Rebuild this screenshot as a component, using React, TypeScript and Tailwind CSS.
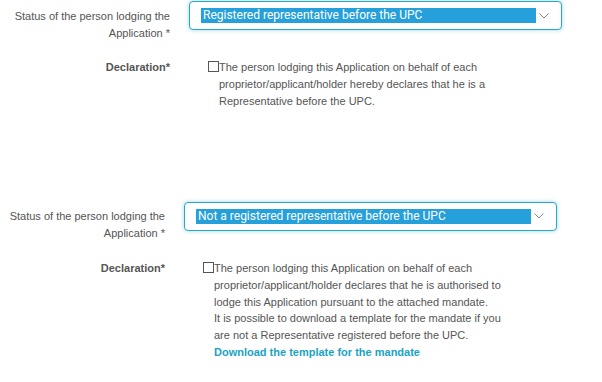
import React from "react";

const arial = { fontFamily: '"Liberation Sans", Arial, sans-serif' };

function Chevron() {
  return (
    <svg width="10" height="6" viewBox="0 0 10 6" className="shrink-0">
      <polyline points="0.5,0.5 5,5 9.5,0.5" fill="none" stroke="#8a8a8a" strokeWidth="1" />
    </svg>
  );
}

function Select({ text }: { text: string }) {
  return (
    <div className="ml-[19px] flex h-[29px] w-[373px] items-center rounded-[4px] border border-[#2aa7c5] bg-white pl-[11px] pr-[12px] shadow-[0_0_4px_rgba(42,167,197,0.45)]">
      <div
        className="h-[15px] w-[335px] bg-[#26a0da] pl-[2px] text-[12px] leading-[15px] text-white whitespace-nowrap"
        style={{ fontFamily: "Roboto, sans-serif" }}
      >
        {text}
      </div>
      <div className="ml-[3px]">
        <Chevron />
      </div>
    </div>
  );
}

function Checkbox() {
  return <span className="mt-[2px] inline-block h-[11px] w-[11px] shrink-0 border border-[#555] bg-white" />;
}

export default function App() {
  return (
    <div className="min-h-[382px] w-[602px] bg-white text-[11px] text-[#555]" style={arial}>
      {/* Block 1 */}
      <div className="pt-[1px]">
        <div className="flex">
          <div className="w-[170px] shrink-0 pt-[6.5px] text-right leading-[17px]">
            Status of the person lodging the
            <br />
            Application *
          </div>
          <Select text="Registered representative before the UPC" />
        </div>
        <div className="mt-[17px] flex">
          <div className="w-[170px] shrink-0 text-right font-bold leading-[17px]">Declaration*</div>
          <div className="ml-[38px] flex">
            <Checkbox />
            <div className="leading-[17px] whitespace-nowrap">
              The person lodging this Application on behalf of each
              <br />
              proprietor/applicant/holder hereby declares that he is a
              <br />
              Representative before the UPC.
            </div>
          </div>
        </div>
      </div>

      {/* Block 2 */}
      <div className="mt-[92px]">
        <div className="flex">
          <div className="w-[165px] shrink-0 pt-[6.5px] text-right leading-[17px]">
            Status of the person lodging the
            <br />
            Application *
          </div>
          <Select text="Not a registered representative before the UPC" />
        </div>
        <div className="mt-[18px] flex">
          <div className="w-[165px] shrink-0 text-right font-bold leading-[17px]">Declaration*</div>
          <div className="ml-[38px] flex">
            <Checkbox />
            <div className="leading-[16.8px] whitespace-nowrap">
              The person lodging this Application on behalf of each
              <br />
              proprietor/applicant/holder declares that he is authorised to
              <br />
              lodge this Application pursuant to the attached mandate.
              <br />
              It is possible to download a template for the mandate if you
              <br />
              are not a Representative registered before the UPC.
              <br />
              <a className="font-bold text-[#1aa3c3]">Download the template for the mandate</a>
            </div>
          </div>
        </div>
      </div>
    </div>
  );
}
